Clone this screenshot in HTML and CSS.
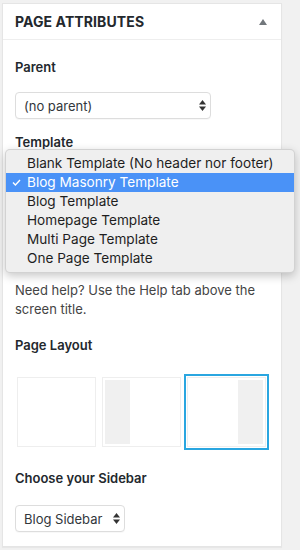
FILE: index.html
```html
<!DOCTYPE html>
<html lang="en">
<head>
<meta charset="utf-8">
<title>Page Attributes</title>
<link rel="stylesheet" href="styles.css">
</head>
<body>
<div class="panel">
  <div class="panel-head">
    <h2 class="panel-title">Page Attributes</h2>
    <svg class="toggle" width="8" height="6" viewBox="0 0 8 6"><polygon points="4,0 8,6 0,6" fill="#72777c"/></svg>
  </div>
  <div class="panel-body">
    <div class="label first">Parent</div>
    <div class="select wide">
      <span>(no parent)</span>
      <svg class="arrows" width="7" height="11" viewBox="0 0 7 11"><polygon points="3.5,0 7,4.5 0,4.5" fill="#333"/><polygon points="0,6.5 7,6.5 3.5,11" fill="#333"/></svg>
    </div>
    <div class="label">Template</div>
    <div class="template-area">
      <div class="menu">
        <div class="menu-item">Blank Template (No header nor footer)</div>
        <div class="menu-item selected">
          <svg class="check" width="9" height="7" viewBox="0 0 9 7"><polyline points="1,3.6 3.4,6 8,1" fill="none" stroke="#fff" stroke-width="1.4"/></svg>
          Blog Masonry Template
        </div>
        <div class="menu-item">Blog Template</div>
        <div class="menu-item">Homepage Template</div>
        <div class="menu-item">Multi Page Template</div>
        <div class="menu-item">One Page Template</div>
      </div>
    </div>
    <p class="help">Need help? Use the Help tab above the screen title.</p>
    <div class="label">Page Layout</div>
    <div class="layouts">
      <div class="layout"><div class="layout-img"></div></div>
      <div class="layout"><div class="layout-img left"><div class="stripe"></div></div></div>
      <div class="layout active"><div class="layout-img right"><div class="stripe"></div></div></div>
    </div>
    <div class="label sidebar-label">Choose your Sidebar</div>
    <div class="select narrow">
      <span>Blog Sidebar</span>
      <svg class="arrows" width="7" height="11" viewBox="0 0 7 11"><polygon points="3.5,0 7,4.5 0,4.5" fill="#333"/><polygon points="0,6.5 7,6.5 3.5,11" fill="#333"/></svg>
    </div>
  </div>
</div>
</body>
</html>
```
FILE: styles.css
```css
html, body {
  margin: 0;
  padding: 0;
  background: #f1f1f1;
}
body {
  font-family: Inter, "Liberation Sans", sans-serif;
  font-size: 13px;
  color: #444;
  width: 300px;
  height: 550px;
  overflow: hidden;
}
.panel {
  box-sizing: border-box;
  width: 280px;
  margin: 3px 0 0 2px;
  background: #fff;
  border: 1px solid #e5e5e5;
  box-shadow: 0 1px 1px rgba(0,0,0,0.04);
}
.panel-head {
  height: 35px;
  border-bottom: 1px solid #eee;
  display: flex;
  align-items: center;
  justify-content: space-between;
  padding: 0 14px 0 12px;
}
.panel-title {
  margin: 0;
  font-size: 14px;
  font-weight: 700;
  text-transform: uppercase;
  color: #23282d;
  line-height: 35px;
  letter-spacing: 0.1px;
}
.toggle {
  display: block;
  margin-top: 1px;
}
.panel-body {
  padding: 18px 12px 14px;
}
.label {
  font-weight: 600;
  color: #23282d;
  line-height: 19px;
  margin-top: 14px;
}
.label.first {
  margin-top: 0;
}
.select {
  box-sizing: border-box;
  height: 27px;
  border: 1px solid #ddd;
  border-radius: 4px;
  background: #fff;
  display: flex;
  align-items: center;
  justify-content: space-between;
  padding: 0 4px 0 8px;
  color: #32373c;
  font-size: 13px;
  margin-top: 15px;
  box-shadow: 0 1px 1px rgba(0,0,0,0.03);
}
.select.wide {
  width: 196px;
}
.select.narrow {
  width: 110px;
  margin-top: 17px;
}
.arrows {
  display: block;
}
.template-area {
  position: relative;
  height: 129px;
}
.menu {
  position: absolute;
  top: -3px;
  left: -10px;
  width: 290px;
  box-sizing: border-box;
  padding: 4px 0;
  background: #efefef;
  border: 1px solid rgba(0,0,0,0.12);
  border-radius: 5px;
  box-shadow: 0 3px 10px rgba(0,0,0,0.22);
  font-size: 13.6px;
  color: #1e1e1e;
}
.menu-item {
  position: relative;
  height: 19px;
  line-height: 19px;
  padding-left: 21px;
  white-space: nowrap;
}
.menu-item.selected {
  background: #4a92f7;
  color: #fff;
}
.check {
  position: absolute;
  left: 6px;
  top: 6px;
}
.help {
  margin: 0;
  line-height: 19px;
  color: #444;
}
.help + .label {
  margin-top: 17px;
}
.layouts {
  display: flex;
  gap: 6px;
  margin-top: 22px;
  padding-left: 2px;
}
.layout-img {
  box-sizing: border-box;
  width: 79px;
  height: 70px;
  border: 1px solid #eee;
  padding: 2px;
  background: #fff;
  display: flex;
}
.layout-img.right {
  justify-content: flex-end;
}
.stripe {
  width: 25px;
  height: 100%;
  background: #f0f0f0;
}
.layout.active .layout-img {
  outline: 2px solid #2aa6e0;
  outline-offset: 1px;
}
.sidebar-label {
  margin-top: 22px;
}
```
